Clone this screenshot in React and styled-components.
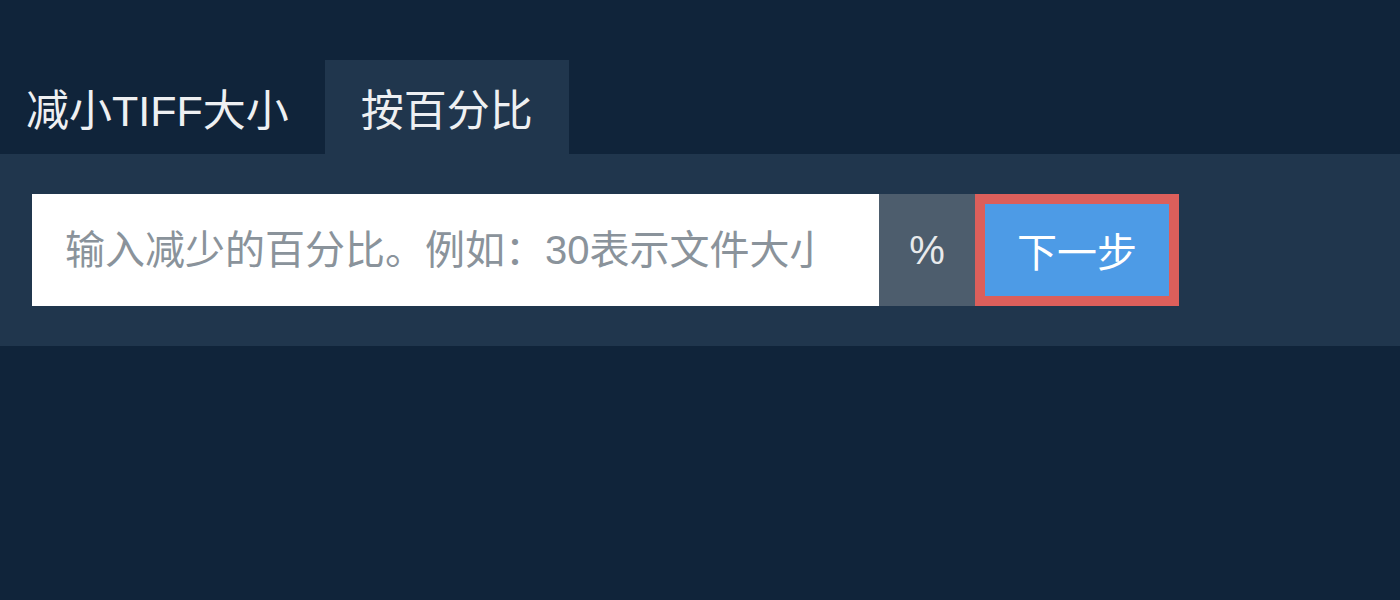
import React from "react";
import styled, { createGlobalStyle } from "styled-components";

const Global = createGlobalStyle`
  html, body { margin: 0; padding: 0; background: #10243a; }
  body { font-family: "Liberation Sans", "Noto Sans CJK SC", sans-serif; }
  * { box-sizing: border-box; }
`;

const Page = styled.div`
  width: 1400px;
  height: 600px;
  background: #10243a;
  padding-top: 60px;
`;

const TabBar = styled.div`
  display: flex;
  height: 94px;
`;

const Tab = styled.div`
  display: flex;
  align-items: center;
  padding: 0 36px;
  font-size: 43px;
  color: #eef0f2;
  background: ${(p) => (p.$active ? "#20364d" : "transparent")};
  &:first-child { padding-left: 26px; }
`;

const Panel = styled.div`
  background: #20364d;
  padding: 40px 32px;
`;

const Row = styled.div`
  display: flex;
  height: 112px;
`;

const Input = styled.input`
  width: 847px;
  height: 100%;
  border: none;
  outline: none;
  background: #ffffff;
  padding: 0 64px 0 33px;
  font-family: "Liberation Sans", "Noto Sans CJK SC", sans-serif;
  font-size: 40px;
  color: #333;
  &::placeholder { color: #8a939b; }
`;

const Addon = styled.div`
  width: 96px;
  display: flex;
  align-items: center;
  justify-content: center;
  background: #4d5d6d;
  color: #e8eaec;
  font-size: 40px;
`;

const Button = styled.button`
  width: 204px;
  height: 100%;
  border: 10px solid #dc5f5b;
  background: #4d9be6;
  color: #ffffff;
  font-family: "Liberation Sans", "Noto Sans CJK SC", sans-serif;
  font-size: 40px;
  padding: 0;
  cursor: pointer;
`;

export default function App() {
  return (
    <Page>
      <Global />
      <TabBar>
        <Tab>减小TIFF大小</Tab>
        <Tab $active>按百分比</Tab>
      </TabBar>
      <Panel>
        <Row>
          <Input placeholder="输入减少的百分比。例如：30表示文件大小减少30%" />
          <Addon>%</Addon>
          <Button>下一步</Button>
        </Row>
      </Panel>
    </Page>
  );
}
